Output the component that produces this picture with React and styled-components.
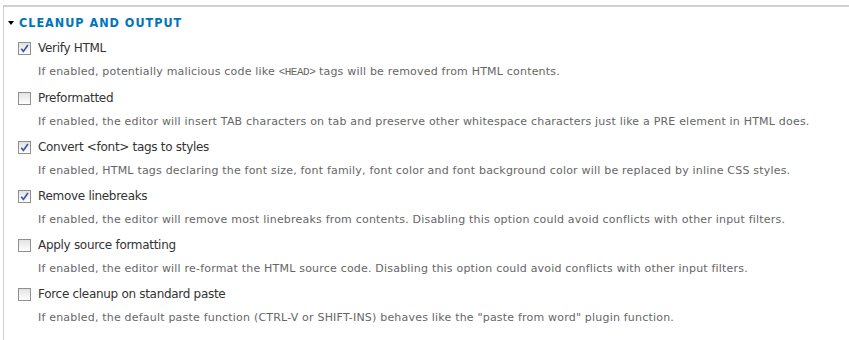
import React from "react";
import styled, { createGlobalStyle } from "styled-components";

const GlobalStyle = createGlobalStyle`
	body {
		margin: 0;
		background: #fff;
		font-family: "DejaVu Sans", Verdana, sans-serif;
	}
`;

const Fieldset = styled.section`
	margin: 5px 0 0 3px;
	border-top: 2px solid #d0d0d0;
	border-left: 1px solid #d0d0d0;
	height: 340px;
	box-sizing: border-box;
	padding: 8px 0 0 4px;
`;

const Legend = styled.h2`
	margin: 0;
	display: flex;
	align-items: center;
	gap: 5px;
	font-family: "DejaVu Sans Condensed", "DejaVu Sans", sans-serif;
	font-stretch: condensed;
	font-size: 12.5px;
	letter-spacing: 1px;
	font-weight: bold;
	color: #0074bd;
	line-height: 16px;
`;

const Arrow = styled.span`
	width: 0;
	height: 0;
	border-left: 3.5px solid transparent;
	border-right: 3.5px solid transparent;
	border-top: 4px solid #000;
`;

const List = styled.div`
	display: flex;
	flex-direction: column;
	gap: 11px;
	padding: 10px 0 0 10px;
`;

const Item = styled.div`
	display: flex;
	flex-direction: column;
	gap: 8px;
`;

const Label = styled.label`
	display: flex;
	align-items: center;
	gap: 7px;
	font-size: 12px;
	letter-spacing: -0.3px;
	line-height: 15px;
	color: #333;
`;

const Box = styled.span`
	width: 11px;
	height: 11px;
	border: 1px solid #8f8f8f;
	background: linear-gradient(#e2e2e2, #fff);
	display: flex;
	align-items: center;
	justify-content: center;
`;

const Desc = styled.div`
	padding-left: 20px;
	font-size: 11px;
	letter-spacing: 0.2px;
	line-height: 15px;
	color: #666;
`;

const Code = styled.code`
	font-family: "Liberation Mono", monospace;
	font-size: 11px;
	letter-spacing: -0.5px;
`;

const items = [
	{
		label: "Verify HTML",
		checked: true,
		desc: (
			<>
				If enabled, potentially malicious code like <Code>&lt;HEAD&gt;</Code> tags
				will be removed from HTML contents.
			</>
		),
	},
	{
		label: "Preformatted",
		checked: false,
		desc: "If enabled, the editor will insert TAB characters on tab and preserve other whitespace characters just like a PRE element in HTML does.",
	},
	{
		label: "Convert <font> tags to styles",
		checked: true,
		desc: "If enabled, HTML tags declaring the font size, font family, font color and font background color will be replaced by inline CSS styles.",
	},
	{
		label: "Remove linebreaks",
		checked: true,
		desc: "If enabled, the editor will remove most linebreaks from contents. Disabling this option could avoid conflicts with other input filters.",
	},
	{
		label: "Apply source formatting",
		checked: false,
		desc: "If enabled, the editor will re-format the HTML source code. Disabling this option could avoid conflicts with other input filters.",
	},
	{
		label: "Force cleanup on standard paste",
		checked: false,
		desc: 'If enabled, the default paste function (CTRL-V or SHIFT-INS) behaves like the "paste from word" plugin function.',
	},
];

export default function App() {
	return (
		<>
			<GlobalStyle />
			<Fieldset>
				<Legend>
					<Arrow />
					CLEANUP AND OUTPUT
				</Legend>
				<List>
					{items.map((item) => (
						<Item key={item.label}>
							<Label>
								<Box>
									{item.checked && (
										<svg width="9" height="9" viewBox="0 0 9 9">
											<path
												d="M1.2 4.8 L3.4 7.4 L7.9 1"
												fill="none"
												stroke="#3d56a8"
												strokeWidth="1.7"
											/>
										</svg>
									)}
								</Box>
								{item.label}
							</Label>
							<Desc>{item.desc}</Desc>
						</Item>
					))}
				</List>
			</Fieldset>
		</>
	);
}
